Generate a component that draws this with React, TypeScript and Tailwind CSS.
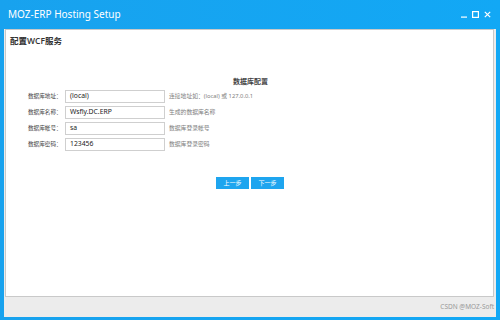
import React from "react";

const rows = [
  { label: "数据库地址：", value: "(local)", hint: "连接地址如：(local) 或 127.0.0.1" },
  { label: "数据库名称：", value: "Wsfly.DC.ERP", hint: "生成的数据库名称" },
  { label: "数据库帐号：", value: "sa", hint: "数据库登录帐号" },
  { label: "数据库密码：", value: "123456", hint: "数据库登录密码" },
];

export default function App() {
  const font = { fontFamily: '"Noto Sans", "Noto Sans CJK SC", sans-serif' };
  return (
    <div className="w-[500px] h-[320px] bg-gradient-to-r from-[#18a2ee] to-[#12a8f5] flex flex-col overflow-hidden" style={font}>
      <div className="h-[29px] flex items-center justify-between pl-[8px] pr-[9px] shrink-0">
        <span className="text-white text-[10px] leading-none -mt-[1px]">MOZ-ERP Hosting Setup</span>
        <div className="flex items-center gap-[5px] text-white -mt-[1px]">
          <svg width="6" height="7" viewBox="0 0 6 7"><rect x="0" y="5.5" width="6" height="1.2" fill="white" /></svg>
          <svg width="7" height="7" viewBox="0 0 7 7"><rect x="0.6" y="0.6" width="5.8" height="5.8" fill="none" stroke="white" strokeWidth="1.2" /></svg>
          <svg width="7" height="7" viewBox="0 0 7 7"><path d="M0.8 0.8 L6.2 6.2 M6.2 0.8 L0.8 6.2" stroke="white" strokeWidth="1.2" /></svg>
        </div>
      </div>
      <div className="flex-1 mx-[4px] mb-[3px] bg-[#ececec] flex flex-col">
        <div className="flex-1 ml-[1px] mr-[2px] bg-white border border-[#c9c9c9] flex flex-col">
          <div className="pl-[4px] pt-[5px] text-[8.5px] font-semibold text-[#333] leading-[12px]" style={{ fontFamily: '"Open Sans", "Noto Sans CJK SC", sans-serif' }}>配置WCF服务</div>
          <div className="mt-[31px] text-center text-[7px] font-bold text-[#444] leading-[8px] pl-[2px]">数据库配置</div>
          <div className="mt-[4px] flex flex-col gap-[3px] pl-[22px]">
            {rows.map((r) => (
              <div key={r.label} className="flex items-center h-[13px]">
                <span className="w-[37px] text-[5.6px] text-[#444] whitespace-nowrap">{r.label}</span>
                <div className="w-[100px] h-[13px] border border-[#cfcfcf] flex items-center pl-[4px] text-[6.8px] text-[#222]">{r.value}</div>
                <span className="ml-[4px] text-[5.8px] text-[#808080] whitespace-nowrap">{r.hint}</span>
              </div>
            ))}
          </div>
          <div className="mt-[26px] flex justify-center gap-[2px] pl-[1px]">
            <div className="w-[33px] h-[12px] bg-[#1ea5ef] text-white text-[6px] flex items-center justify-center">上一步</div>
            <div className="w-[33px] h-[12px] bg-[#1ea5ef] text-white text-[6px] flex items-center justify-center">下一步</div>
          </div>
        </div>
        <div className="h-[20px] shrink-0 flex items-center justify-end pr-[2px]">
          <span className="text-[6.5px] text-[#999]">CSDN @MOZ-Soft</span>
        </div>
      </div>
    </div>
  );
}
